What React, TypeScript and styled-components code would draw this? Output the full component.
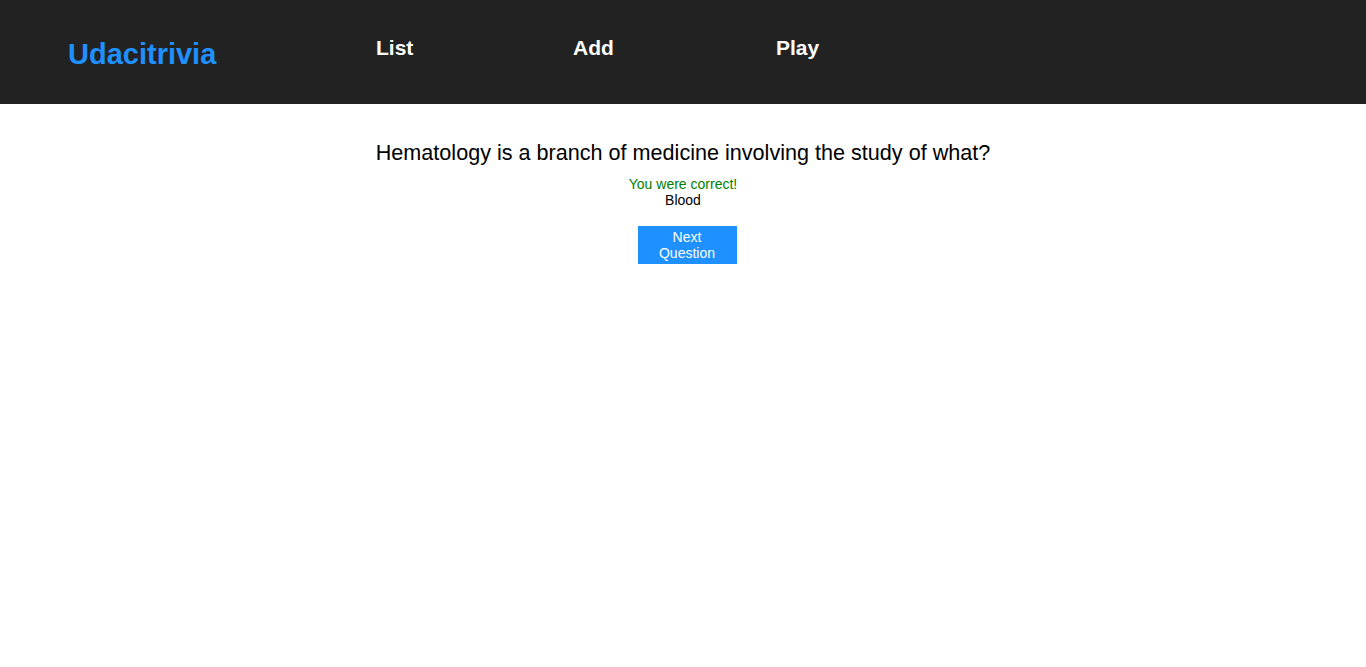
import React from 'react';
import styled, { createGlobalStyle } from 'styled-components';

const GlobalStyle = createGlobalStyle`
  html, body {
    margin: 0;
    padding: 0;
    background: #fff;
    font-family: "Liberation Sans", Arial, sans-serif;
  }
`;

const Header = styled.header`
  background-color: #222;
  height: 64px;
  padding: 20px;
  color: white;
  display: flex;
  flex-direction: row;
  align-items: flex-start;
`;

const Logo = styled.h1`
  margin: 18px 0 0 48px;
  font-size: 29px;
  font-weight: bold;
  color: dodgerblue;
  cursor: pointer;
  width: 308px;
`;

const NavItem = styled.h2<{ w: number }>`
  margin: 16px 0 0 0;
  font-size: 21px;
  font-weight: bold;
  color: white;
  cursor: pointer;
  width: ${(p) => p.w}px;
`;

const QuizHolder = styled.div`
  display: flex;
  flex-direction: column;
  align-items: center;
  padding-top: 36px;
`;

const Question = styled.div`
  font-size: 21.6px;
  color: #000;
  margin-bottom: 10px;
`;

const Result = styled.div<{ correct?: boolean }>`
  font-size: 14px;
  line-height: 16px;
  color: ${(p) => (p.correct ? 'green' : '#000')};
`;

const NextButton = styled.button`
  margin: 18px 0 0 8px;
  width: 99px;
  height: 38px;
  border: none;
  background-color: dodgerblue;
  color: white;
  font-family: "Liberation Sans", Arial, sans-serif;
  font-size: 14px;
  line-height: 16px;
  padding: 2px 12px;
  cursor: pointer;
`;

const App = () => {
  return (
    <>
      <GlobalStyle />
      <Header>
        <Logo>Udacitrivia</Logo>
        <NavItem w={197}>List</NavItem>
        <NavItem w={203}>Add</NavItem>
        <NavItem w={100}>Play</NavItem>
      </Header>
      <QuizHolder>
        <Question>Hematology is a branch of medicine involving the study of what?</Question>
        <Result correct>You were correct!</Result>
        <Result>Blood</Result>
        <NextButton>Next Question</NextButton>
      </QuizHolder>
    </>
  );
};

export default App;
